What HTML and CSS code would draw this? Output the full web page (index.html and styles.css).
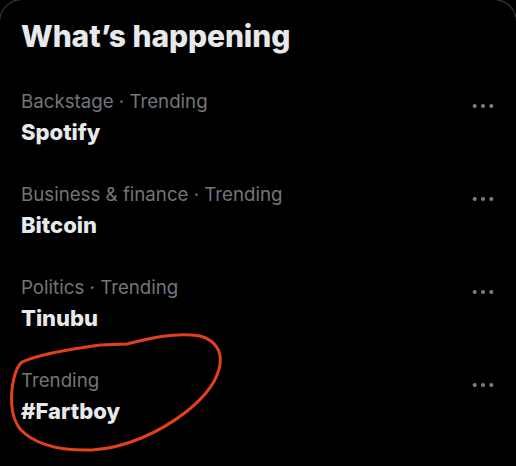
FILE: index.html
```html
<!DOCTYPE html>
<html lang="en">
<head>
<meta charset="utf-8">
<title>What’s happening</title>
<link rel="stylesheet" href="styles.css">
</head>
<body>
<section class="card">
  <h2 class="title">What’s happening</h2>
  <div class="trend">
    <div class="trend-text">
      <div class="meta">Backstage · Trending</div>
      <div class="name">Spotify</div>
    </div>
    <svg class="more" viewBox="0 0 22 20" width="22" height="20"><circle cx="2.7" cy="10" r="2.1"/><circle cx="11" cy="10" r="2.1"/><circle cx="19.3" cy="10" r="2.1"/></svg>
  </div>
  <div class="trend">
    <div class="trend-text">
      <div class="meta">Business &amp; finance · Trending</div>
      <div class="name">Bitcoin</div>
    </div>
    <svg class="more" viewBox="0 0 22 20" width="22" height="20"><circle cx="2.7" cy="10" r="2.1"/><circle cx="11" cy="10" r="2.1"/><circle cx="19.3" cy="10" r="2.1"/></svg>
  </div>
  <div class="trend">
    <div class="trend-text">
      <div class="meta">Politics · Trending</div>
      <div class="name">Tinubu</div>
    </div>
    <svg class="more" viewBox="0 0 22 20" width="22" height="20"><circle cx="2.7" cy="10" r="2.1"/><circle cx="11" cy="10" r="2.1"/><circle cx="19.3" cy="10" r="2.1"/></svg>
  </div>
  <div class="trend">
    <div class="trend-text">
      <div class="meta">Trending</div>
      <div class="name">#Fartboy</div>
    </div>
    <svg class="more" viewBox="0 0 22 20" width="22" height="20"><circle cx="2.7" cy="10" r="2.1"/><circle cx="11" cy="10" r="2.1"/><circle cx="19.3" cy="10" r="2.1"/></svg>
  </div>
</section>
<svg class="scribble" viewBox="0 0 516 466" width="516" height="466">
  <path d="M22 362 C40 354 70 349 100 345 L127 344 C150 338 175 332 200 336 C215 340 222 351 220 364 C218 381 206 396 186 412 C160 432 126 448 92 450 C60 451 35 445 20 429 C10 416 10 395 14 378 C16 370 18 365 22 362 Z"/>
</svg>
</body>
</html>
```
FILE: styles.css
```css
html, body {
  margin: 0;
  padding: 0;
  background: #000;
  overflow: hidden;
}
body {
  display: flow-root;
  position: relative;
  width: 516px;
  height: 466px;
  font-family: Inter, "Liberation Sans", sans-serif;
}
.card {
  margin: -1px -1px 0 -1px;
  border: 1px solid #3a3d40;
  border-bottom: none;
  border-radius: 23px 23px 0 0;
  padding: 18px 22px 0 21px;
}
.title {
  margin: 0 0 18px 0;
  font-size: 30px;
  line-height: 36px;
  font-weight: 800;
  color: #e7e9ea;
  letter-spacing: -0.1px;
}
.trend {
  display: flex;
  align-items: flex-start;
  justify-content: space-between;
  padding: 18px 0 19px 0;
}
.trend-text {
  display: flex;
  flex-direction: column;
  gap: 4px;
}
.meta {
  font-size: 18.7px;
  line-height: 24px;
  color: #71767b;
}
.name {
  font-size: 22px;
  line-height: 28px;
  font-weight: 800;
  color: #e7e9ea;
}
.more {
  margin-top: 6px;
  fill: #7a7e83;
}
.scribble {
  position: absolute;
  left: 0;
  top: 0;
  pointer-events: none;
}
.scribble path {
  fill: none;
  stroke: #e2401b;
  stroke-width: 3;
  stroke-linejoin: round;
  stroke-linecap: round;
}
```
